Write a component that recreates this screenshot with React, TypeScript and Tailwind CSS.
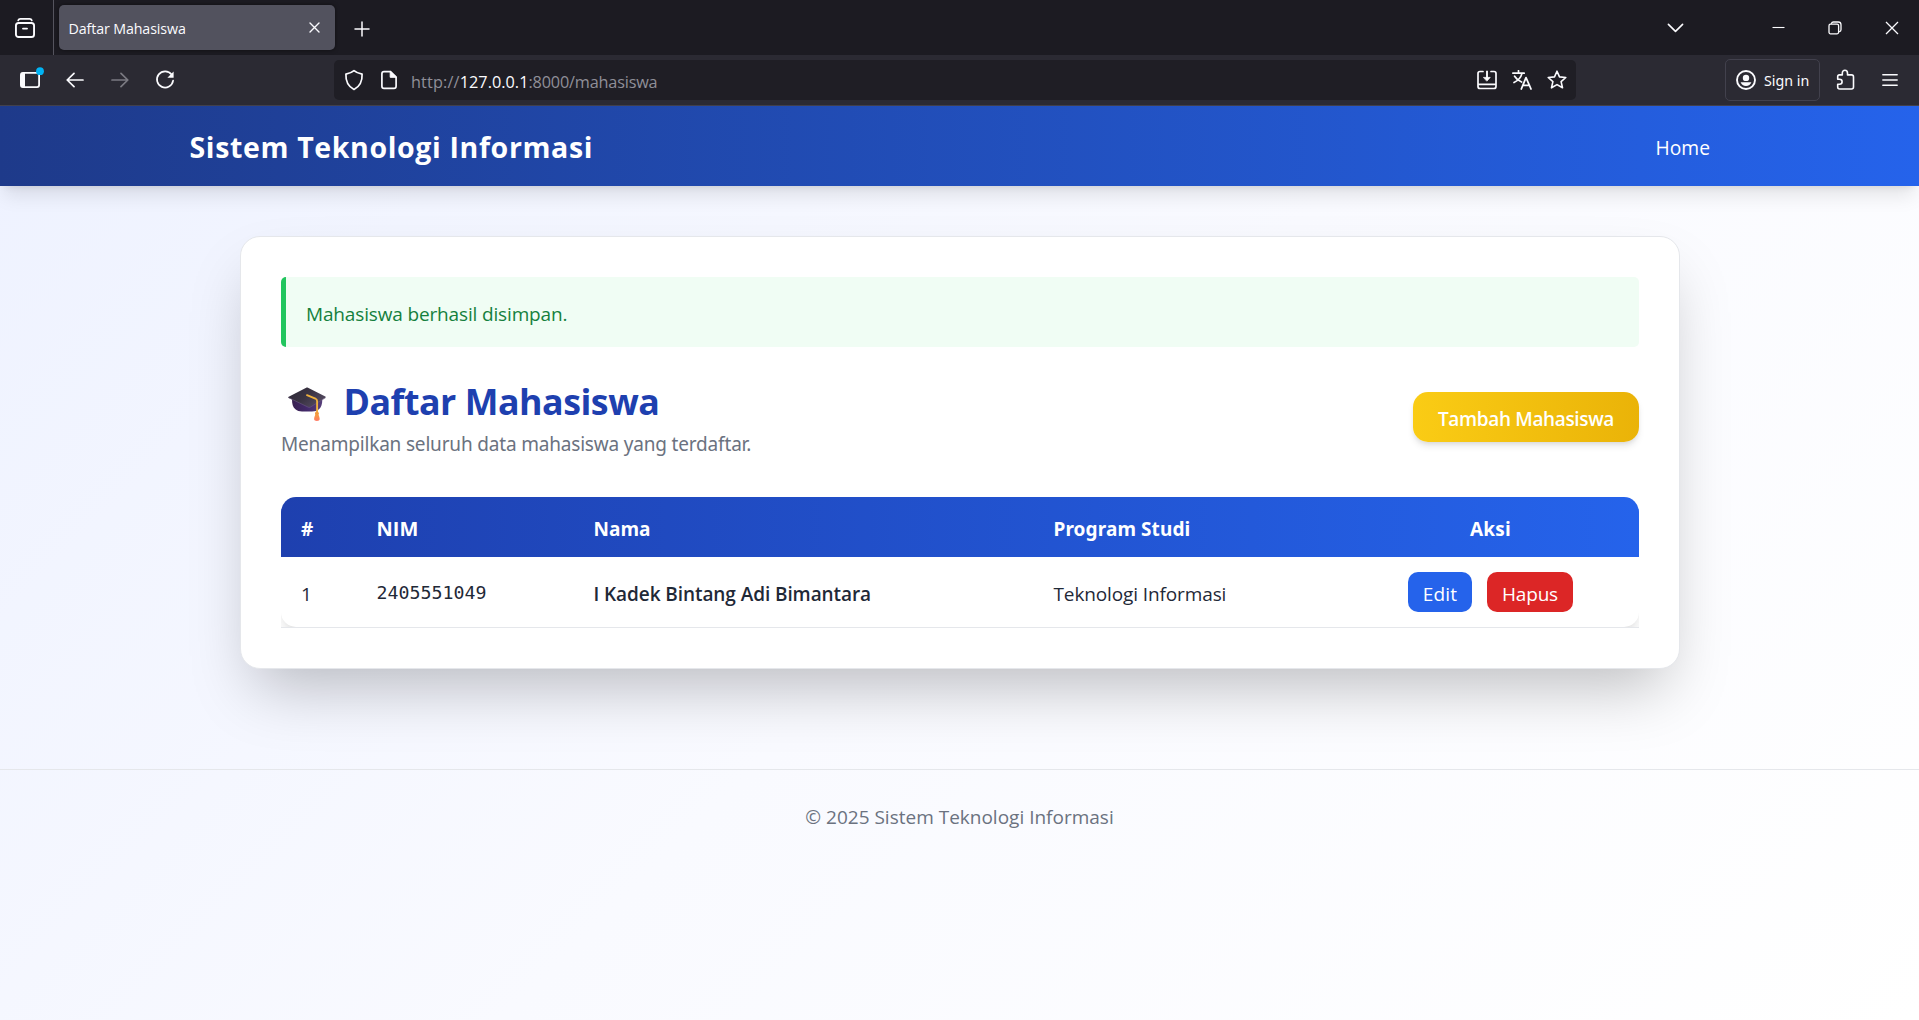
import React from 'react';

type IconProps = { className?: string; w?: number; h?: number; children: React.ReactNode };

function Icon({ className = '', w = 20, h = 20, children }: IconProps) {
  return (
    <svg
      width={w}
      height={h}
      viewBox={`0 0 ${w} ${h}`}
      fill="none"
      stroke="currentColor"
      strokeWidth={1.7}
      strokeLinecap="round"
      strokeLinejoin="round"
      className={`shrink-0 ${className}`}
    >
      {children}
    </svg>
  );
}

function TabBar() {
  return (
    <div className="flex h-[55px] items-center bg-[#1c1b22] text-[#fbfbfe]">
      <div className="flex h-full w-[54px] items-center border-r border-[#55545e] pl-[15px]">
        <Icon h={22}>
          <path d="M3.2 3.4C3.6 2.3 4.3 1.9 5.4 1.9h9.2c1.1 0 1.8.4 2.2 1.5" />
          <rect x="0.95" y="6" width="18.1" height="14" rx="2.6" strokeWidth={1.9} />
          <path d="M8 11.6h4" strokeWidth={1.9} />
        </Icon>
      </div>
      <div className="ml-[5px] flex h-[45px] w-[276px] items-center justify-between rounded-[5px] bg-[#52525e] pr-[15px] pl-[9.5px] shadow-[0_0_4px_rgba(0,0,0,0.5)]">
        <span className="pt-[2px] text-[14.25px] tracking-[-0.12px]">Daftar Mahasiswa</span>
        <Icon w={11} h={11} className="-mt-px">
          <path d="M1 1l9 9M10 1l-9 9" strokeWidth={1.4} />
        </Icon>
      </div>
      <Icon w={16} h={16} className="mt-[3px] ml-[18.5px]">
        <path d="M8 1v14M1 8h14" strokeWidth={1.5} />
      </Icon>
      <div className="ml-auto flex items-center">
        <Icon w={17} h={10} className="mr-[88px]">
          <path d="M1.4 1.4l7.1 7 7.1-7" strokeWidth={1.6} />
        </Icon>
        <Icon w={13} h={13} className="mr-[43px]">
          <path d="M0.5 6.5h12" strokeWidth={1.1} strokeLinecap="butt" />
        </Icon>
        <Icon w={14} h={14} className="mr-[43px]">
          <rect x="1" y="3.2" width="9.6" height="9.6" rx="1.5" strokeWidth={1.3} />
          <path d="M3.4 2.4C3.8 1.2 4.5 1 5.4 1h4.8c1.9 0 2.8.9 2.8 2.8v4.6c0 1.2-.4 1.8-1.4 2.2" strokeWidth={1.3} />
        </Icon>
        <Icon w={14} h={14} className="mr-[20.5px]">
          <path d="M1 1l12 12M13 1L1 13" strokeWidth={1.3} strokeLinecap="butt" />
        </Icon>
      </div>
    </div>
  );
}

function Toolbar() {
  return (
    <div className="flex h-[51px] items-center border-b border-[#42414d] bg-[#2b2a33] text-[#fbfbfe]">
      <Icon w={25} h={22} className="-mt-[5px] ml-[20px]">
        <rect x="0.9" y="5.9" width="18.2" height="14.2" rx="2" strokeWidth={1.8} />
        <path d="M1 7.5C1 6.4 1.6 6 2.6 6H5v14H2.6C1.6 20 1 19.5 1 18.5z" fill="currentColor" stroke="none" />
        <circle cx="20" cy="4.2" r="3.9" fill="#00b3f4" stroke="none" />
      </Icon>
      <Icon w={18} h={16} className="ml-[21px]">
        <path d="M8 1.3L1.2 8 8 14.7M1.5 8H17" />
      </Icon>
      <Icon w={18} h={16} className="ml-[27px] text-[#7b7a82]">
        <path d="M10 1.3L16.8 8 10 14.7M16.5 8H1" />
      </Icon>
      <Icon w={20} h={20} className="ml-[26px]">
        <path d="M16.6 4.6A8.1 8.1 0 1 0 18.1 10.6" />
        <path d="M18.6 1.6v6.2h-6.2z" fill="currentColor" stroke="none" />
      </Icon>
      <div className="ml-[159px] flex h-[40px] w-[1242px] items-center rounded-[5px] bg-[#1f1e25] pl-[10px]">
        <Icon w={20} h={22}>
          <path d="M10 1.7c1.8 1.6 4.2 2.7 8.1 3.4.3 6.5-1.5 12-8.1 15.4C3.4 17.1 1.6 11.6 1.9 5.1 5.8 4.4 8.2 3.3 10 1.7z" />
        </Icon>
        <Icon w={18} h={20} className="ml-[16px]">
          <path d="M10.5 1.7H4C2.6 1.7 1.9 2.5 1.9 3.8v12.4c0 1.3.7 2.1 2.1 2.1h10c1.4 0 2.1-.8 2.1-2.1V7.2z" />
          <path d="M10.2 1.5v5.8h6z" fill="currentColor" strokeWidth={1} />
        </Icon>
        <div className="flex pt-[5px] pl-[13px] text-[16.25px] text-[#8f8f98]">
          <span className="tracking-[0.15px]">http://</span>
          <span className="tracking-[0.02px] text-[#fbfbfe]">127.0.0.1</span>
          <span className="tracking-[-0.18px]">:8000/mahasiswa</span>
        </div>
        <div className="mr-[9px] ml-auto flex items-center gap-[15px]">
          <Icon>
            <path d="M6 1.5H3C1.7 1.5 1 2.2 1 3.5v13C1 17.8 1.7 18.5 3 18.5h14c1.3 0 2-.7 2-2v-13c0-1.3-.7-2-2-2h-3M1.5 14.3h17" />
            <path d="M10 0.8v8" strokeLinecap="butt" strokeWidth={1.9} />
            <path d="M6.8 7.4h6.4L10 10.9z" fill="currentColor" strokeWidth={0.8} />
          </Icon>
          <Icon>
            <path d="M0.8 3.2h11.4M6.5 0.7v2.5M2.6 6.2c1.8 3 4.3 4.8 7 5.8M10 3.4C8.9 7.6 6 10.8 2 12.5" />
            <path d="M9.3 19l4.7-11.4L19 19M11 15.3h6.5" strokeWidth={1.8} />
          </Icon>
          <Icon>
            <path d="M10 1.2l2.5 5.7 6.3.6-4.7 4.1 1.4 6.2-5.5-3.2-5.5 3.2 1.4-6.2-4.7-4.1 6.3-.6z" strokeWidth={1.6} />
          </Icon>
        </div>
      </div>
      <div className="ml-[149px] flex h-[42px] w-[95px] items-center rounded-[5px] border border-[#42414d] pl-[10px]">
        <Icon>
          <circle cx="10" cy="10" r="9" strokeWidth={1.9} />
          <circle cx="10" cy="7.9" r="3.2" fill="currentColor" stroke="none" />
          <path d="M4.6 12.3h10.8c-.8 2.4-2.8 3.7-5.4 3.7s-4.6-1.3-5.4-3.7z" fill="currentColor" stroke="none" />
        </Icon>
        <span className="pt-[2px] pl-[8px] font-['Noto_Sans',sans-serif] text-[14.25px] whitespace-nowrap">Sign in</span>
      </div>
      <Icon w={19} h={22} className="ml-[16px]">
        <path
          d="M1.7 10.2V7.6c0-1 .6-1.7 1.7-1.7H6.3V4.2c0-1.8 1.1-2.9 2.6-2.9s2.6 1.1 2.6 2.9v1.7h4c1.3 0 2 .7 2 2V18c0 1.3-.7 2-2 2H3.7c-1.3 0-2-.7-2-2v-2.8h1.8c1.6 0 2.6-1 2.6-2.5s-1-2.5-2.6-2.5z"
          strokeWidth={1.6}
        />
      </Icon>
      <Icon w={16} h={14} className="ml-[27px]">
        <path d="M0.8 1.7h14.4M0.8 7h14.4M0.8 12.3h14.4" strokeWidth={1.4} />
      </Icon>
    </div>
  );
}

function GraduationCap() {
  return (
    <svg width="38" height="35" viewBox="0 0 38 35" className="shrink-0" aria-hidden="true">
      <defs>
        <linearGradient id="cap-board" x1="0" y1="0" x2="1" y2="0.6">
          <stop offset="0" stopColor="#2d2836" />
          <stop offset="0.55" stopColor="#3a3343" />
          <stop offset="1" stopColor="#544a60" />
        </linearGradient>
        <linearGradient id="cap-base" x1="0" y1="0" x2="1" y2="0">
          <stop offset="0" stopColor="#38214f" />
          <stop offset="0.5" stopColor="#43296b" />
          <stop offset="1" stopColor="#57407a" />
        </linearGradient>
        <linearGradient id="cap-tassel" x1="0" y1="0" x2="0" y2="1">
          <stop offset="0" stopColor="#f5a53c" />
          <stop offset="1" stopColor="#ff7a66" />
        </linearGradient>
      </defs>
      <path d="M4 12c0 5 .8 8.4 3.4 10.3 2 1.6 3.8 2.2 6.6 2.2h10c3 0 5-.6 7-2.2 2.4-1.9 3.3-5.3 3.3-10.3z" fill="url(#cap-base)" />
      <path d="M18.2.8c.6-.3 1.2-.3 1.8 0L37.3 9.6c.6.3.6.8 0 1.1L22.3 19.8c-.8.4-1.4.4-2.2 0L.7 10.9c-.6-.3-.6-.9 0-1.2z" fill="url(#cap-board)" />
      <path d="M.5 10.6l19.7 9.6c.7.3 1.3.3 2 0l15.3-9.4" fill="none" stroke="#6b5a80" strokeWidth="0.6" />
      <path d="M19 8.2l8.4 3.3c1.3.6 1.7 1.3 1.7 2.7V27" fill="none" stroke="#eeb03d" strokeWidth="1.9" strokeLinecap="round" />
      <path d="M27.6 26.3h2.6c.3 2 1.4 3.6 1.5 5.6.1 1.3-1.2 2-2.8 2s-2.9-.7-2.8-2c.1-2 1.2-3.6 1.5-5.6z" fill="url(#cap-tassel)" />
      <circle cx="28.9" cy="26.3" r="1.9" fill="#f39a3c" />
    </svg>
  );
}

function SiteNav() {
  return (
    <nav className="relative flex h-[80px] items-center justify-between bg-linear-to-r/srgb from-[#1e3a8a] to-[#2563eb] pr-[209px] pl-[189.5px] text-white shadow-[0_12.5px_18.75px_-3.75px_rgba(0,0,0,0.1),0_5px_7.5px_-5px_rgba(0,0,0,0.1)]">
      <span className="pt-[2px] text-[28.5px] leading-[40px] font-bold tracking-[0.64px]">Sistem Teknologi Informasi</span>
      <a className="pt-[4px] text-[19.25px] leading-[30px]">Home</a>
    </nav>
  );
}

function StudentTable() {
  return (
    <div className="mt-[40px] h-[131px] overflow-hidden border-b border-[#e5e7eb]">
      <div className="h-[130px] overflow-hidden rounded-[15px] bg-white shadow-[0_12.5px_18.75px_-3.75px_rgba(0,0,0,0.1),0_5px_7.5px_-5px_rgba(0,0,0,0.1)]">
        <table className="w-full table-fixed border-collapse text-left text-[19px] leading-[30px] text-[#1f2937]">
          <colgroup>
            <col className="w-[75px]" />
            <col className="w-[217px]" />
            <col className="w-[460px]" />
            <col className="w-[309px]" />
            <col className="w-[297px]" />
          </colgroup>
          <thead className="bg-linear-to-r/srgb from-[#1e40af] to-[#2563eb] text-white">
            <tr className="h-[60px]">
              <th className="px-[20px] pt-[4px]">#</th>
              <th className="px-[20.5px] pt-[4px] text-[20px]">NIM</th>
              <th className="px-[20.5px] pt-[4px]">Nama</th>
              <th className="px-[20.5px] pt-[4px] font-['Noto_Sans',sans-serif] tracking-[0.1px]">Program Studi</th>
              <th className="px-[20px] pt-[4px] text-center tracking-[0.2px]">Aksi</th>
            </tr>
          </thead>
          <tbody>
            <tr className="h-[70px]">
              <td className="px-[20px] pt-[4px]">1</td>
              <td className="px-[20.5px] pt-[2px] font-['DejaVu_Sans_Mono',monospace] text-[18.25px]">2405551049</td>
              <td className="px-[20.5px] pt-[4px] font-semibold tracking-[-0.08px]">I Kadek Bintang Adi Bimantara</td>
              <td className="px-[20.5px] pt-[4px] tracking-[-0.12px]">Teknologi Informasi</td>
              <td className="p-0">
                <div className="flex justify-center gap-[15px] text-white">
                  <button className="h-[40px] w-[64px] rounded-[10px] bg-[#2563eb] pt-[4px] tracking-[0.2px]">Edit</button>
                  <button className="h-[40px] w-[86px] rounded-[10px] bg-[#dc2626] pt-[4px] tracking-[-0.2px]">Hapus</button>
                </div>
              </td>
            </tr>
          </tbody>
        </table>
      </div>
    </div>
  );
}

export default function App() {
  return (
    <div className="flex h-[1020px] w-full flex-col overflow-hidden font-['Open_Sans',sans-serif]">
      <TabBar />
      <Toolbar />
      <div className="flex flex-1 flex-col bg-[linear-gradient(135deg,#eef2ff_0%,#f9faff_50%,#ffffff_100%)]">
        <SiteNav />
        <main className="pt-[50px] pl-[240px]">
          <section className="h-[433px] w-[1440px] rounded-[20px] border border-[#e5e7eb] bg-white p-[40px] shadow-[0_31.25px_62.5px_-15px_rgba(0,0,0,0.25)]">
            <div className="flex h-[70px] items-center rounded-[5px] border-l-[5px] border-[#22c55e] bg-[#f0fdf4] pt-[4px] pl-[20px] text-[19px] tracking-[-0.15px] text-[#15803d]">
              Mahasiswa berhasil disimpan.
            </div>
            <div className="mt-[30px] flex h-[80px] items-center justify-between">
              <div>
                <h1 className="flex h-[45px] items-center text-[35.75px] leading-[45px] font-bold tracking-[-0.48px] text-[#1e40af]">
                  <span className="mt-[9px] mr-[17.5px] ml-[7px]">
                    <GraduationCap />
                  </span>
                  <span className="pt-[3px]">Daftar Mahasiswa</span>
                </h1>
                <p className="mt-[5px] h-[30px] pt-[2px] font-['Noto_Sans',sans-serif] text-[19px] leading-[30px] tracking-[-0.18px] text-[#6b7280]">
                  Menampilkan seluruh data mahasiswa yang terdaftar.
                </p>
              </div>
              <button className="h-[50px] w-[226px] rounded-[15px] bg-linear-to-r/srgb from-[#facc15] to-[#eab308] pt-[4px] text-[19px] font-semibold tracking-[-0.35px] text-white shadow-[0_5px_7.5px_-1.25px_rgba(0,0,0,0.1),0_2.5px_5px_-2.5px_rgba(0,0,0,0.1)]">
                Tambah Mahasiswa
              </button>
            </div>
            <StudentTable />
          </section>
        </main>
        <footer className="mt-[100px] border-t border-[#e5e7eb] pt-[32px] text-center text-[19px] leading-[30px] text-[#6b7280]">
          © 2025 Sistem Teknologi Informasi
        </footer>
      </div>
    </div>
  );
}
